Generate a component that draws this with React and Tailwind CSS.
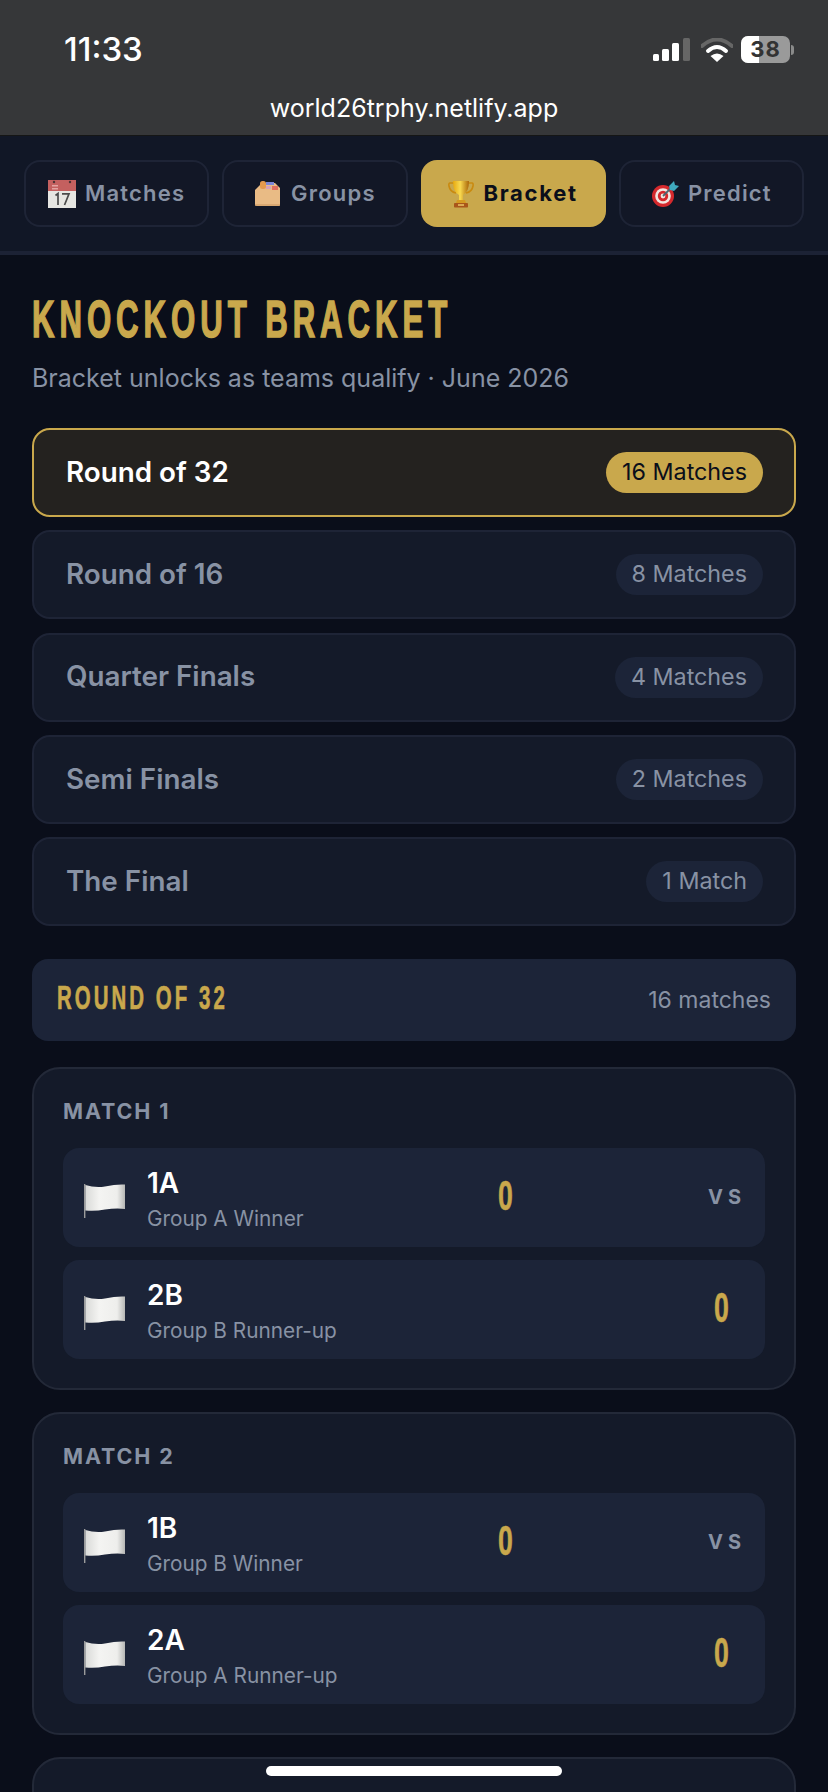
const tabs = [
  { label: 'Matches', icon: <CalendarIcon /> },
  { label: 'Groups', icon: <BagIcon /> },
  { label: 'Bracket', icon: <TrophyIcon />, active: true },
  { label: 'Predict', icon: <DartIcon /> },
];

const rounds = [
  { name: 'Round of 32', count: '16 Matches', active: true },
  { name: 'Round of 16', count: '8 Matches' },
  { name: 'Quarter Finals', count: '4 Matches' },
  { name: 'Semi Finals', count: '2 Matches' },
  { name: 'The Final', count: '1 Match' },
];

const matches = [
  { title: 'MATCH 1', home: ['1A', 'Group A Winner'], away: ['2B', 'Group B Runner-up'] },
  { title: 'MATCH 2', home: ['1B', 'Group B Winner'], away: ['2A', 'Group A Runner-up'] },
];

function CalendarIcon() {
  return (
    <svg width="28" height="28" viewBox="0 0 28 28">
      <rect x="0" y="0" width="28" height="28" fill="#e6e6e2" />
      <rect x="0" y="0" width="28" height="11" fill="#c4605f" />
      <circle cx="6" cy="2" r="1.2" fill="#4a3334" />
      <circle cx="22" cy="2" r="1.2" fill="#4a3334" />
      <rect x="4" y="5" width="6" height="1.5" fill="#e3a3a2" />
      <rect x="4" y="8" width="6" height="1.5" fill="#e3a3a2" />
      <path d="M7.5 15.5 L10 13.5 V25 M14 13.8 H21 L16.5 25" fill="none" stroke="#4b4b4b" strokeWidth="1.7" />
    </svg>
  );
}

function BagIcon() {
  return (
    <svg width="28" height="26" viewBox="0 0 28 26">
      <path d="M3 7 L8 2 H21 L26 7 V24 Q26 25 25 25 H3 Q1 25 1 24 V9 Z" fill="#e9bb85" />
      <rect x="6" y="0" width="6" height="8" rx="2.5" fill="#e59a4e" />
      <rect x="12" y="1" width="8" height="3" fill="#7c86d6" />
      <rect x="12" y="5" width="5" height="3" fill="#d8a0b8" />
      <rect x="18" y="5" width="6" height="4" fill="#df6f5f" />
      <path d="M1 24 H26" stroke="#c9955f" strokeWidth="1" />
    </svg>
  );
}

function TrophyIcon() {
  return (
    <svg width="26" height="28" viewBox="0 0 26 28">
      <defs>
        <linearGradient id="cup" x1="0" x2="1" y1="0" y2="0">
          <stop offset="0" stopColor="#e7a90f" />
          <stop offset="0.45" stopColor="#f8d94f" />
          <stop offset="1" stopColor="#a9660a" />
        </linearGradient>
      </defs>
      <path d="M6 3 H2 Q0.5 3 1 6 Q2 12 8 13 M20 3 H24 Q25.5 3 25 6 Q24 12 18 13" fill="none" stroke="#c98a10" strokeWidth="1.6" />
      <path d="M5 1 H21 Q21 12 15 15 V20 H11 V15 Q5 12 5 1 Z" fill="url(#cup)" />
      <path d="M9 20 H17 L18 23 H8 Z" fill="#d59a20" />
      <rect x="6" y="23" width="14" height="4.5" rx="0.8" fill="#a9561a" />
      <rect x="10" y="24.2" width="6" height="1.6" fill="#e6bd62" />
    </svg>
  );
}

function DartIcon() {
  return (
    <svg width="28" height="26" viewBox="0 0 28 26">
      <circle cx="12" cy="15" r="11" fill="#d5292d" />
      <circle cx="12" cy="15" r="7.8" fill="#f3e6e0" />
      <circle cx="12" cy="15" r="5.2" fill="#d5292d" />
      <circle cx="12" cy="15" r="2.4" fill="#f3e6e0" />
      <path d="M12 15 L22 5" stroke="#4f6670" strokeWidth="1.8" />
      <path d="M18 5 L23 0 L24 4 L28 5 L23 10 L19 9 Z" fill="#3fa9bd" />
    </svg>
  );
}

function FlagIcon() {
  return (
    <svg width="42" height="35" viewBox="0 0 42 35" className="shrink-0 mt-[5px]">
      <defs>
        <linearGradient id="flag" x1="0" x2="1" y1="0" y2="0">
          <stop offset="0" stopColor="#d9dad8" />
          <stop offset="0.35" stopColor="#f4f4f2" />
          <stop offset="0.8" stopColor="#eeeeec" />
          <stop offset="1" stopColor="#b5b6b4" />
        </linearGradient>
      </defs>
      <rect x="0" y="1" width="1.4" height="34" fill="#9b9c9c" />
      <path d="M1.4 2 Q11 5 21 3.500 Q32 1 41 1.500 V26 Q32 25 21 26.500 Q11 28.500 1.400 27.500 Z" fill="url(#flag)" />
    </svg>
  );
}

function StatusIcons() {
  return (
    <div className="flex items-center">
      <svg width="37" height="23" viewBox="0 0 37 23">
        <rect x="0" y="16" width="6" height="7" rx="1.5" fill="#fff" />
        <rect x="9" y="11" width="7" height="12" rx="1.5" fill="#fff" />
        <rect x="19" y="5" width="7" height="18" rx="1.5" fill="#fff" />
        <rect x="30" y="0" width="7" height="23" rx="1.5" fill="#666" />
      </svg>
      <svg width="32" height="24" viewBox="0 0 32 24" className="ml-[11px]">
        <path d="M1 8 Q16 -5 31 8" fill="none" stroke="#666" strokeWidth="4" strokeLinecap="round" />
        <path d="M7 13 Q16 5 25 13" fill="none" stroke="#fff" strokeWidth="4" strokeLinecap="round" />
        <path d="M16 24 L9.5 18 Q16 13 22.500 18 Z" fill="#fff" />
      </svg>
      <div className="relative ml-[8px] w-[49px] h-[27px] rounded-[7px] overflow-hidden bg-[#9a9a9a]">
        <div className="h-full w-[18px] bg-white" />
        <span className="absolute inset-0 flex items-center justify-center text-[22px] font-bold tracking-[1px] text-[#333] font-['Inter',sans-serif]">38</span>
      </div>
      <div className="ml-[1px] w-[3px] h-[10px] rounded-r-full bg-[#8a8a8a]" />
    </div>
  );
}

function TeamRow({ team, children }) {
  return (
    <div className="relative flex items-center h-[99px] rounded-[16px] bg-[#1c2438] pl-[21px] pr-[19px]">
      <FlagIcon />
      <div className="ml-[21px] pt-[3px]">
        <div className="text-[28px] leading-[34px] font-semibold text-white">{team[0]}</div>
        <div className="text-[20.800px] leading-[28px] mt-[5px] text-[#8892a4]">{team[1]}</div>
      </div>
      {children}
    </div>
  );
}

function MatchCard({ match }) {
  return (
    <div className="rounded-[28px] border-2 border-[#232938] bg-[#141a29] px-[29px] pt-[30px] h-[323px]">
      <div className="text-[21.500px] leading-[24px] font-bold tracking-[1.9px] text-[#8892a4]">{match.title}</div>
      <div className="mt-[25px] flex flex-col gap-[13px]">
        <TeamRow team={match.home}>
          <span className="absolute left-[435px] top-[26px] origin-left scale-x-[0.62] font-['Liberation_Sans',sans-serif] font-bold text-[43px] leading-none text-[#c9a84c] [-webkit-text-stroke:0.6px_#c9a84c]">0</span>
          <span className="ml-auto text-[20px] font-bold tracking-[5px] text-[#8892a4] mt-[-1px]">VS</span>
        </TeamRow>
        <TeamRow team={match.away}>
          <span className="ml-auto mr-[17px] mt-[-5px] origin-right scale-x-[0.62] font-['Liberation_Sans',sans-serif] font-bold text-[43px] leading-none text-[#c9a84c] [-webkit-text-stroke:0.6px_#c9a84c]">0</span>
        </TeamRow>
      </div>
    </div>
  );
}

export default function App() {
  return (
    <div className="relative w-[828px] h-[1792px] overflow-hidden bg-[#0a0e1a] font-['Inter',sans-serif]">
      {/* browser chrome */}
      <header className="h-[136px] bg-[#363739] border-b border-black/60 px-[64px] flex flex-col">
        <div className="flex items-center justify-between pt-[17px] h-[82px]">
          <span className="text-[33px] font-medium text-white">11:33</span>
          <div className="mr-[-30px]"><StatusIcons /></div>
        </div>
        <div className="text-center text-[25px] leading-[30px] mt-[11px] text-white">world26trphy.netlify.app</div>
      </header>

      <nav className="h-[119px] grid grid-cols-4 gap-[13px] px-[24px] pt-[24px] bg-[#111726] border-b-4 border-[#1c2235]">
        {tabs.map((t) => (
          <div
            key={t.label}
            className={
              t.active
                ? 'h-[67px] rounded-[16px] bg-[#c9a84c] flex items-center justify-center gap-[9px] text-[22px] font-bold tracking-[1.700px] text-[#0a0e1a]'
                : 'h-[67px] rounded-[16px] border-2 border-[#1e2436] bg-[#121726] flex items-center justify-center gap-[9px] text-[22px] font-semibold tracking-[1.200px] text-[#8892a4]'
            }
          >
            {t.icon}
            <span>{t.label}</span>
          </div>
        ))}
      </nav>

      <main className="px-[32px]">
        <h1 className="mt-[34px] origin-left scale-x-[0.6] whitespace-nowrap font-['Liberation_Sans',sans-serif] font-bold text-[52px] leading-[60px] tracking-[8.200px] text-[#c9a84c] [-webkit-text-stroke:1.5px_#c9a84c]">KNOCKOUT BRACKET</h1>
        <p className="mt-[13px] text-[25px] leading-[32px] text-[#8892a4]">Bracket unlocks as teams qualify · June 2026</p>

        <div className="mt-[34px] flex flex-col gap-[13.300px]">
          {rounds.map((r) => (
            <div
              key={r.name}
              className={
                r.active
                  ? 'h-[89px] rounded-[18px] border-2 border-[#c9a84c] bg-[#24221f] pl-[32px] pr-[31px] flex items-center justify-between'
                  : 'h-[89px] rounded-[18px] border-2 border-[#1e2436] bg-[#141a29] pl-[32px] pr-[31px] flex items-center justify-between'
              }
            >
              <span className={r.active ? 'text-[27.800px] font-semibold text-white' : 'text-[27.800px] font-semibold text-[#8892a4]'}>{r.name}</span>
              <span
                className={
                  r.active
                    ? 'h-[41px] rounded-full bg-[#c9a84c] px-[16px] flex items-center text-[23.300px] text-[#0a0e1a]'
                    : 'h-[41px] rounded-full bg-[#1c2438] px-[16px] flex items-center text-[23.300px] text-[#8892a4]'
                }
              >
                {r.count}
              </span>
            </div>
          ))}
        </div>

        <div className="mt-[33px] h-[82px] rounded-[16px] bg-[#1c2438] pl-[25px] pr-[25px] flex items-center justify-between">
          <span className="mt-[-5px] origin-left scale-x-[0.6] whitespace-nowrap font-['Liberation_Sans',sans-serif] font-bold text-[34px] tracking-[5.100px] text-[#c9a84c] [-webkit-text-stroke:0.7px_#c9a84c]">ROUND OF 32</span>
          <span className="text-[23px] text-[#8892a4]">16 matches</span>
        </div>

        <div className="mt-[26px] flex flex-col gap-[22px]">
          {matches.map((m) => (
            <MatchCard key={m.title} match={m} />
          ))}
          <div className="rounded-[28px] border-2 border-[#232938] bg-[#141a29] h-[323px]" />
        </div>
      </main>

      {/* home indicator */}
      <div className="absolute left-[266px] top-[1766px] w-[296px] h-[10px] rounded-full bg-white" />
    </div>
  );
}
